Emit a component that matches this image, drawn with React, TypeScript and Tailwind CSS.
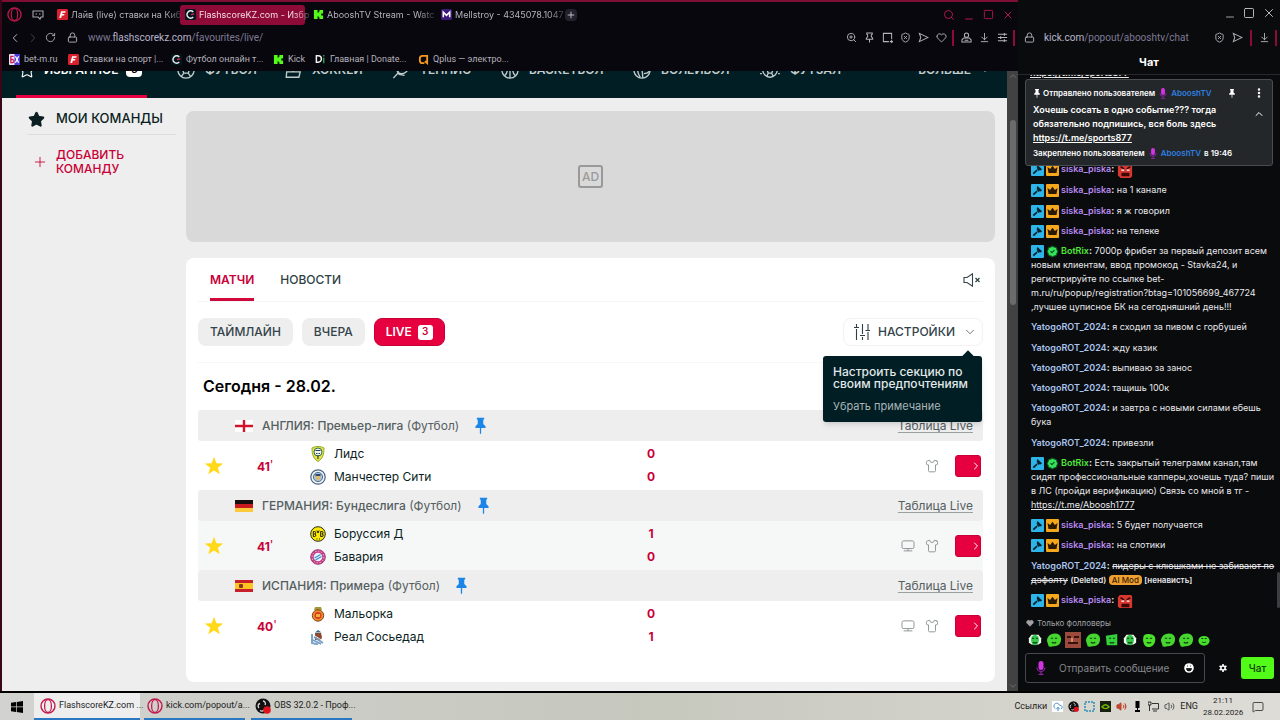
import type { ReactNode } from "react";
import {
  ArrowDownToLine,
  BadgeCheck,
  ChevronDown,
  ChevronLeft,
  ChevronRight,
  ChevronUp,
  CloudUpload,
  EllipsisVertical,
  Heart,
  Lock,
  MessageSquare,
  Minus,
  Plus,
  RotateCw,
  Search,
  ShieldX,
  Shirt,
  Square,
  Star,
  Volume2,
  X,
  ZoomIn,
} from "lucide-react";

/* ---------- small drawings ---------- */

const OperaIcon = ({ className = "size-4" }: { className?: string }) => (
  <svg viewBox="0 0 16 16" className={className} fill="none" stroke="#c4184c">
    <circle cx="8" cy="8" r="7" strokeWidth="1.4" />
    <ellipse cx="8" cy="8" rx="3.4" ry="6.4" strokeWidth="1.3" />
  </svg>
);

const KickIcon = () => (
  <svg viewBox="0 0 12 12" className="size-[11px] shrink-0">
    <path d="M1 1h4v3h1V3h1V1h4v4H9v2h2v4H7V9H6V8H5v3H1z" fill="#53fc18" />
  </svg>
);

const FlashIcon = () => (
  <svg viewBox="0 0 12 12" className="size-[11px] shrink-0">
    <rect width="12" height="12" rx="2" fill="#04161d" />
    <path d="M9 3.2A4 4 0 1 0 9 8.8" fill="none" stroke="#e8eef0" strokeWidth="1.6" />
    <path d="M6.5 6.2 10 5.2" stroke="#e8254f" strokeWidth="1.4" />
  </svg>
);

const FonbetIcon = () => (
  <svg viewBox="0 0 12 12" className="size-[11px] shrink-0">
    <rect width="12" height="12" rx="1.5" fill="#d8202e" />
    <path d="M4.5 2.5h5L9 4.2H6l-.3 1.2h2.5l-.5 1.6H5.3L4.5 9.8h-2z" fill="#fff" />
  </svg>
);

const MellIcon = () => (
  <svg viewBox="0 0 12 12" className="size-[11px] shrink-0">
    <rect width="12" height="12" rx="2" fill="#3d1a78" />
    <path d="M2.5 9V3.5L6 7l3.5-3.5V9" fill="none" stroke="#fff" strokeWidth="1.7" />
  </svg>
);

const BetIcon = () => (
  <svg viewBox="0 0 12 12" className="size-[11px] shrink-0">
    <rect width="12" height="12" rx="1" fill="#e9e6ff" />
    <path d="M6 0h6v12H6z" fill="#4a3ae0" />
    <path d="M5 2.5H2v7h2A1.8 1.8 0 0 0 4 6H2" fill="none" stroke="#d3174a" strokeWidth="1.4" />
    <path d="m7 2.5 3.5 7M10.5 2.5l-3.5 7" stroke="#fff" strokeWidth="1.4" />
  </svg>
);

const DonateIcon = () => (
  <svg viewBox="0 0 12 12" className="size-[11px] shrink-0">
    <path d="M1.5 2v7h2a3.5 3.5 0 0 0 0-7z" fill="none" stroke="#f2f2f2" strokeWidth="1.6" />
    <path d="M9.5 1v1.6M9.5 4v6" stroke="#2d9b55" strokeWidth="1.6" />
  </svg>
);

const QplusIcon = () => (
  <svg viewBox="0 0 12 12" className="size-[11px] shrink-0">
    <path d="M7 10H5a3 3 0 0 1-3-3V5a3 3 0 0 1 3-3h5v8L7.500 8" fill="none" stroke="#f39a1e" strokeWidth="2" />
  </svg>
);

const PushPin = ({ className }: { className: string }) => (
  <svg viewBox="0 0 12 18" className={className} fill="currentColor">
    <path d="M2 0h8v1.600L9 2.200v4.600l2.500 2.400v2.100H6.700V17L6 18l-.7-1V11.300H.5V9.200L3 6.800V2.200l-1-.6z" />
  </svg>
);

const PinOutline = () => (
  <svg viewBox="0 0 12 12" className="size-[11px]" fill="none" stroke="currentColor" strokeWidth="1.100">
    <path d="M3 1h6v1.500l-1 .5v2l1.500 2v1h-7V7L4 5V3l-1-.5zM6 8v3.500" />
  </svg>
);

const SnapshotIcon = () => (
  <svg viewBox="0 0 12 12" className="size-[11px]" fill="none" stroke="currentColor" strokeWidth="1.100">
    <path d="M7.500 10.500h-6v-9h9v6M10.500 8.500v3.500M8.500 10.500H12" />
  </svg>
);

const SendOutline = () => (
  <svg viewBox="0 0 12 12" className="size-[11px] shrink-0" fill="none" stroke="currentColor" strokeWidth="1.100">
    <path d="M1.500 1.500 11 6l-9.500 4.500L3 6z" />
  </svg>
);

const ProfileIcon = () => (
  <svg viewBox="0 0 12 12" className="size-[11px]" fill="none" stroke="currentColor" strokeWidth="1.100">
    <circle cx="6" cy="3.500" r="2.300" />
    <path d="M3 6.500h6l2 2v2.500H1V8.500zM4 9h4" />
  </svg>
);

const EasySetupIcon = () => (
  <svg viewBox="0 0 12 12" className="size-[11px]" fill="none" stroke="currentColor" strokeWidth="1.200">
    <path d="M1 2.500h10M1 6h10M1 9.500h10M8 1v3M4 4.500v3M8 8v3" />
  </svg>
);

const ModBadge = () => (
  <svg viewBox="0 0 13 13" className="mr-0.5 inline size-[13px] align-[-4px]">
    <rect width="13" height="13" rx="1" fill="#2db4e8" />
    <path d="m6.500 2 4.500 4.200-1.200 1.200-1-.3-1 1-2-2 .6-.8-.8-1zM5.500 6.500l1.200 1.200-3.800 3.600-1.200-1.200z" fill="#06222e" />
  </svg>
);

const CrownBadge = () => (
  <svg viewBox="0 0 13 13" className="mr-0.5 inline size-[13px] align-[-4px]">
    <rect width="13" height="13" rx="1" fill="#f5a81c" />
    <path d="m1.500 4 2.600 2L6.500 2.800 8.900 6l2.600-2-1 6h-8z" fill="#2a1a02" />
  </svg>
);

const BotBadge = () => <BadgeCheck className="mr-0.5 inline size-[13px] fill-[#35e05a] align-[-4px] text-[#0b4a1b]" />;

const AngryEmote = () => (
  <svg viewBox="0 0 18 18" className="-my-0.5 inline size-4 align-[-5px]">
    <path d="M3 1h13l1 2v12l-2 2H4l-3-3V4z" fill="#d8382f" />
    <path d="m4 4 4 2.500M15 4l-4 2.500" stroke="#2b0504" strokeWidth="1.600" />
    <path d="M5 8h3M11 8h3" stroke="#fff" strokeWidth="1.500" />
    <rect x="5" y="11" width="9" height="4" rx="1" fill="#3b0806" />
  </svg>
);

const Mic = ({ className = "inline h-[11px] w-2 align-[-2px]" }: { className?: string }) => (
  <svg viewBox="0 0 10 14" className={className}>
    <rect x="2.500" y="0" width="5" height="9" rx="2.500" fill="#d033e0" />
    <path d="M1 6.500a4 4 0 0 0 8 0M5 10.500V13M2.500 13.300h5" fill="none" stroke="#8a22a6" strokeWidth="1.200" />
  </svg>
);

const MonitorIcon = () => (
  <svg viewBox="0 0 16 14" className="h-3 w-3.5" fill="none" stroke="#8b9193" strokeWidth="1.100">
    <rect x="1" y="1" width="14" height="9" rx="2" />
    <path d="M8 10v2.500M3 12.700h10" />
  </svg>
);

const SlidersIcon = () => (
  <svg viewBox="0 0 16 16" className="size-4" fill="none" stroke="#2f3f43" strokeWidth="1.100">
    <path d="M2.500 0v3M2.500 5v11M0 3.500h5M8.500 0v10M8.500 13v3M6 11.500h5M14 0v6M14 8v8M11.500 6.500h4.500" />
  </svg>
);

const MutedIcon = () => (
  <svg viewBox="0 0 18 14" className="h-3.5 w-[18px]" fill="none" stroke="#33434a">
    <path d="M1 4.500h3L9.500.8v12.400L4 9.500H1z" strokeWidth="1.100" />
    <path d="m12.500 5 4 4M16.500 5l-4 4" strokeWidth="1.300" />
  </svg>
);

const Ball = () => (
  <svg viewBox="0 0 20 20" className="size-[18px]" fill="none" stroke="currentColor" strokeWidth="1.500">
    <circle cx="10" cy="10" r="9" />
    <path d="m10 6 4 3-1.500 4.500h-5L6 9zM14 9l4.500-1M12.500 13.500l2.500 3.500M7.500 13.500 5 17M6 9 1.500 8M10 6V1" />
  </svg>
);

const Basket = () => (
  <svg viewBox="0 0 20 20" className="size-[18px]" fill="none" stroke="currentColor" strokeWidth="1.500">
    <circle cx="10" cy="10" r="9" />
    <path d="M10 1v18M4 3.500c4 4 4 9 0 13M16 3.500c-4 4-4 9 0 13" />
  </svg>
);

const Volley = () => (
  <svg viewBox="0 0 20 20" className="size-[18px]" fill="none" stroke="currentColor" strokeWidth="1.500">
    <circle cx="10" cy="10" r="9" />
    <path d="M10 10 3 4.500M10 10l8-4M10 10l1 9M5 9c0 4 1 6 3 9M12 14c3 0 5-1 6.500-3" />
  </svg>
);

const Puck = () => (
  <svg viewBox="0 0 20 20" className="size-[18px]" fill="none" stroke="currentColor" strokeWidth="1.500">
    <path d="M14 1 10 12M3 12h15l-1.500 6h-14z" />
  </svg>
);

const Racket = () => (
  <svg viewBox="0 0 20 20" className="size-[18px]" fill="none" stroke="currentColor" strokeWidth="1.500">
    <ellipse cx="12" cy="8" rx="7" ry="5.500" transform="rotate(-40 12 8)" />
    <path d="m7 13-5.500 6M6 10l2 5 6 1" />
  </svg>
);

const Futsal = () => (
  <svg viewBox="0 0 22 20" className="h-[18px] w-5" fill="none" stroke="currentColor" strokeWidth="1.500">
    <circle cx="11" cy="10" r="8" />
    <path d="m11 6 3.500 3-1.500 4.500H9L7.500 9zM13 13.500l1.500 3.500M9 13.500 7.500 17M0 14h2M20 14h2" />
  </svg>
);

/* ---------- flags and crests ---------- */

const flags: Record<string, ReactNode> = {
  england: (
    <>
      <rect width="18" height="12" fill="#fff" />
      <path d="M9 0v12M0 6h18" stroke="#cf142b" strokeWidth="2.400" />
    </>
  ),
  germany: (
    <>
      <rect width="18" height="4" fill="#1a0d0d" />
      <rect y="4" width="18" height="4" fill="#c91a1f" />
      <rect y="8" width="18" height="4" fill="#fbc93a" />
    </>
  ),
  spain: (
    <>
      <rect width="18" height="12" fill="#c8202a" />
      <rect y="3" width="18" height="6" fill="#fcc521" />
      <rect x="4" y="4" width="4" height="4" rx="1" fill="#8a3a1c" />
    </>
  ),
};

const crests: Record<string, ReactNode> = {
  leeds: (
    <>
      <path d="M8 .5c3 0 5 .8 6 1.500 0 6-1 10.500-6 13.500C3 12.500 2 8 2 2c1-.7 3-1.500 6-1.500z" fill="#e6e23a" stroke="#8fae3a" />
      <circle cx="8" cy="6" r="4" fill="#f1f5e8" stroke="#3c6b52" />
      <path d="M5.500 4.500h5M6 7.500h1.500M8.500 7.500H10M8 9v4" stroke="#23446b" strokeWidth="1.200" />
    </>
  ),
  city: (
    <>
      <circle cx="8" cy="8" r="7.200" fill="#eef3f7" stroke="#4b6280" strokeWidth="1.200" />
      <circle cx="8" cy="8" r="4.600" fill="#9cc4e6" stroke="#54708f" />
      <path d="M5.500 5.500h5V9L8 12 5.500 9z" fill="#e2b96a" />
      <path d="M5.500 6h5" stroke="#2f4a6c" strokeWidth="2" />
    </>
  ),
  bvb: (
    <>
      <circle cx="8" cy="8" r="7.300" fill="#fbe90a" stroke="#2a2a08" />
      <path d="M3.300 5.500v5h1.200a1.300 1.300 0 0 0 0-2.600 1.200 1.200 0 0 0 0-2.400zM10.700 5.500v5h1.200a1.300 1.300 0 0 0 0-2.600 1.200 1.200 0 0 0 0-2.400zM6.900 4.500 8 7l1.100-2.500M6.500 13h1M9 13h1" fill="none" stroke="#15150a" />
    </>
  ),
  bayern: (
    <>
      <circle cx="8" cy="8" r="7.300" fill="#c43a86" stroke="#a83a72" />
      <circle cx="8" cy="8" r="5.900" fill="none" stroke="#f0c4dc" strokeDasharray="1.500 1.500" />
      <circle cx="8" cy="8" r="4.300" fill="#eef4fb" />
      <path d="m4.500 9 6-3.500M5.500 11l6-3.500" stroke="#3d94d8" strokeWidth="1.400" />
    </>
  ),
  mallorca: (
    <>
      <path d="M5 1h6l1 3H4z" fill="#a9983a" />
      <circle cx="8" cy="9.500" r="5.700" fill="#f08a24" stroke="#7a4a22" />
      <circle cx="8" cy="9.500" r="3.400" fill="#d93a2a" />
      <path d="M6 8h4v3H6z" fill="#f3b13a" />
    </>
  ),
  sociedad: (
    <>
      <path d="M2 5v9l6 1.500" fill="none" stroke="#7fa3c4" strokeWidth="2" />
      <path d="M5 4h6l1 4-1 3H5z" fill="#8a4a35" />
      <path d="M5 3.500 8 1l3.500 2.500z" fill="#3f6a8f" />
      <path d="m4 8 9 6M3 11l8 4" stroke="#6f9cc8" strokeWidth="1.600" />
      <path d="m5 7 8 5" stroke="#f0ede6" />
    </>
  ),
};

/* ---------- data ---------- */

const tabs = [
  { icon: <FonbetIcon />, title: "Лайв (live) ставки на Киб" },
  { icon: <FlashIcon />, title: "FlashscoreKZ.com - Избр", active: true },
  { icon: <KickIcon />, title: "AbooshTV Stream - Watc" },
  { icon: <MellIcon />, title: "Mellstroy - 4345078.1047" },
];

const bookmarks = [
  { icon: <BetIcon />, title: "bet-m.ru", width: "w-[59px]" },
  { icon: <FonbetIcon />, title: "Ставки на спорт |...", width: "w-[103px]" },
  { icon: <FlashIcon />, title: "Футбол онлайн т...", width: "w-[102px]" },
  { icon: <KickIcon />, title: "Kick", width: "w-[42px]" },
  { icon: <DonateIcon />, title: "Главная | Donate...", width: "w-[103px]" },
  { icon: <QplusIcon />, title: "Qplus — электро...", width: "w-[102px]" },
];

const sports = [
  { icon: <Ball />, title: "ФУТБОЛ", width: "w-[107px]" },
  { icon: <Puck />, title: "ХОККЕЙ", width: "w-[108px]" },
  { icon: <Racket />, title: "ТЕННИС", width: "w-[109px]" },
  { icon: <Basket />, title: "БАСКЕТБОЛ", width: "w-[132px]" },
  { icon: <Volley />, title: "ВОЛЕЙБОЛ", width: "w-[127px]" },
  { icon: <Futsal />, title: "ФУТЗАЛ", width: "w-[110px]" },
];

const leagues = [
  {
    flag: "england", country: "АНГЛИЯ", name: "Премьер-лига", time: "41", tv: false,
    teams: [["leeds", "Лидс", "0"], ["city", "Манчестер Сити", "0"]],
  },
  {
    flag: "germany", country: "ГЕРМАНИЯ", name: "Бундеслига", time: "41", tv: true, shaded: true,
    teams: [["bvb", "Боруссия Д", "1"], ["bayern", "Бавария", "0"]],
  },
  {
    flag: "spain", country: "ИСПАНИЯ", name: "Примера", time: "40", tv: true,
    teams: [["mallorca", "Мальорка", "0"], ["sociedad", "Реал Сосьедад", "1"]],
  },
];

const messages: { user: "siska" | "bot" | "yatogo"; text: ReactNode }[] = [
  { user: "siska", text: <AngryEmote /> },
  { user: "siska", text: "на 1 канале" },
  { user: "siska", text: "я ж говорил" },
  { user: "siska", text: "на телеке" },
  {
    user: "bot",
    text: "7000р фрибет за первый депозит всем новым клиентам, ввод промокод - Stavka24, и регистрируйте по ссылке bet-m.ru/ru/popup/registration?btag=101056699_467724 ,лучшее цуписное БК на сегодняшний день!!!",
  },
  { user: "yatogo", text: "я сходил за пивом с горбушей" },
  { user: "yatogo", text: "жду казик" },
  { user: "yatogo", text: "выпиваю за занос" },
  { user: "yatogo", text: "тащишь 100к" },
  { user: "yatogo", text: "и завтра с новыми силами ебешь бука" },
  { user: "yatogo", text: "привезли" },
  {
    user: "bot",
    text: (
      <>
        Есть закрытый телеграмм канал,там
        <br />
        сидят профессиональные капперы,хочешь туда? пиши в ЛС (пройди верификацию) Связь со мной в тг -
        <br />
        <a href="#" className="underline">https://t.me/Aboosh1777</a>
      </>
    ),
  },
  { user: "siska", text: "5 будет получается" },
  { user: "siska", text: "на слотики" },
  {
    user: "yatogo",
    text: (
      <>
        <s>пидеры с клюшками не забивают по дэфолту</s>{" "}
        <span className="text-[8px] font-semibold">(Deleted)</span>{" "}
        <span className="rounded-sm bg-[#f0a030] px-[3px] text-[8px] font-medium text-[#3a1d00]">AI Mod</span>{" "}
        <span className="text-[8px] font-semibold">[ненависть]</span>
      </>
    ),
  },
  { user: "siska", text: <AngryEmote /> },
];

const emotes = ["dead", "blob", "photo", "blob", "square", "dead", "tall", "blob", "blob", "small"];

/* ---------- browser chrome ---------- */

function TabStrip() {
  return (
    <div className="flex h-[27px] items-center border-t-2 border-[#7d0f35] pl-[5px] pr-1">
      <OperaIcon className="size-[15px] shrink-0" />
      <svg viewBox="0 0 12 10" className="ml-2.5 h-2.5 w-3 shrink-0" fill="none" stroke="#a7a4ad" strokeWidth="1.100">
        <path d="M1 1h10v6H9L8 9 6 7H1zM3.500 4h1.500M7 4h1.500" />
      </svg>
      <div className="ml-2 flex gap-[3px]">
        {tabs.map((t) => (
          <button
            key={t.title}
            className={
              t.active
                ? "flex h-5 w-[125px] items-center gap-[3px] rounded-[3px] bg-[#8e0b37] px-[5px] text-[#f3dbe3]"
                : "flex h-5 w-[125px] items-center gap-[3px] px-[5px] text-[#b5b2bb]"
            }
          >
            {t.icon}
            <span className="whitespace-nowrap text-[9px] [mask-image:linear-gradient(to_right,black_85%,#0004)]">{t.title}</span>
          </button>
        ))}
      </div>
      <button aria-label="Новая вкладка" className="ml-1 flex size-3 items-center justify-center rounded-sm bg-[#23212c] text-[#d7d4de]">
        <Plus className="size-2.5" />
      </button>
      <div className="ml-auto flex items-center gap-2 text-[#b0184a]">
        <Search className="size-3" strokeWidth={2} />
        <Minus className="mt-2 size-3" strokeWidth={2} />
        <Square className="size-[11px]" strokeWidth={2} />
        <X className="size-3" strokeWidth={2} />
      </div>
    </div>
  );
}

function AddressBar() {
  return (
    <div className="flex h-[21px] items-center pl-1.5 text-[#b5b2bb]">
      <ChevronLeft className="size-3.5" strokeWidth={1.700} />
      <ChevronRight className="ml-1 size-3.5 text-[#45434d]" strokeWidth={1.700} />
      <RotateCw className="ml-[5px] size-[11px]" strokeWidth={1.900} />
      <Lock className="ml-[11px] size-[11px]" strokeWidth={2} />
      <span className="ml-2.5 text-[10px] text-[#7f7a95]">
        www.<span className="text-[#b9b6cc]">flashscorekz.com</span>/favourites/live/
      </span>
      <div className="ml-auto flex items-center gap-[7px] pr-[3px]">
        <ZoomIn className="size-[11px]" />
        <PinOutline />
        <SnapshotIcon />
        <ShieldX className="size-[11px]" />
        <SendOutline />
        <Heart className="size-[11px]" />
        <span className="-ml-0.5 h-4 w-0.5 bg-[#8e0b37]" />
        <ProfileIcon />
        <ArrowDownToLine className="size-[11px]" />
        <EasySetupIcon />
        <span className="-ml-0.5 h-4 w-0.5 bg-[#8e0b37]" />
      </div>
    </div>
  );
}

function Bookmarks() {
  return (
    <div className="flex h-[23px] items-center pl-[7px] text-[9px] text-[#b5b2bb]">
      {bookmarks.map((b) => (
        <a key={b.title} href="#" className={`${b.width} flex shrink-0 items-center gap-1 whitespace-nowrap`}>
          {b.icon}
          {b.title}
        </a>
      ))}
    </div>
  );
}

/* ---------- score page ---------- */

function SportsNav() {
  return (
    <div className="flex h-[27px] shrink-0 flex-col justify-end overflow-hidden bg-[#001e23]">
      <nav className="flex h-[57px] shrink-0 items-stretch pl-3.5 text-xs font-semibold text-[#c3cccd]">
        <a href="#" className="mr-7 flex w-[131px] items-center gap-2 border-b-[3px] border-[#e6003f] pl-0.5 pt-[3px] text-white">
          <Star className="size-[18px]" strokeWidth={1.500} />
          ИЗБРАННОЕ
          <span className="flex h-[15px] w-4 items-center justify-center rounded-sm bg-white text-[10px] text-black">3</span>
        </a>
        {sports.map((s) => (
          <a key={s.title} href="#" className={`${s.width} flex shrink-0 items-center gap-2.5 pl-0.5`}>
            {s.icon}
            {s.title}
          </a>
        ))}
        <button className="ml-auto mr-4 flex items-center gap-2">
          БОЛЬШЕ <ChevronDown className="size-3" />
        </button>
      </nav>
    </div>
  );
}

function Sidebar() {
  return (
    <aside className="w-[184px] shrink-0 pl-[26px] pr-2.5 text-[#0b1e22]">
      <h2 className="flex h-[37px] items-center gap-2 border-b border-[#dcdcdc] pt-1.5 text-[13px] font-medium">
        <Star className="size-[17px] fill-current" />
        <span className="pl-[3px]">МОИ КОМАНДЫ</span>
      </h2>
      <button className="mt-[13px] flex items-center gap-2 pl-1 text-left text-xs font-medium leading-[14px] text-[#c80037]">
        <Plus className="size-4" strokeWidth={1.300} />
        <span>
          ДОБАВИТЬ
          <br />
          КОМАНДУ
        </span>
      </button>
    </aside>
  );
}

function League({ league }: { league: (typeof leagues)[number] }) {
  return (
    <section>
      <header className="flex h-[31px] items-center rounded-[3px] bg-[#eee] pl-[37px] pr-2.5 text-xs text-[#555e61]">
        <svg viewBox="0 0 18 12" className="mr-[9px] h-3 w-[18px]">{flags[league.flag]}</svg>
        <h3>
          <span className="font-medium">{league.country}: {league.name}</span> (Футбол)
        </h3>
        <button aria-label="Закрепить" className="ml-4 text-[#1b86e8]">
          <PushPin className="h-[18px] w-[11px]" />
        </button>
        <a href="#" className="ml-auto underline decoration-[#9aa0a2] underline-offset-2">Таблица Live</a>
      </header>
      <div className={league.shaded ? "flex h-[49px] items-center bg-[#f6f7f7] pr-0.5" : "flex h-[49px] items-center pr-0.5"}>
        <button aria-label="В избранное" className="ml-1.5">
          <svg viewBox="0 0 20 20" className="size-5" fill="#ffd91a">
            <path d="m10 .8 2.400 6.400 6.800.3-5.300 4.200 1.800 6.600L10 14.600l-5.700 3.700 1.800-6.600L.8 7.500l6.800-.3z" />
          </svg>
        </button>
        <span className="ml-[33px] w-5 whitespace-nowrap text-xs font-bold text-[#c80037]">{league.time}<span className="align-[2px] font-normal">'</span></span>
        <div className="ml-[33px] flex flex-1 flex-col gap-[5px]">
          {league.teams.map(([crest, name, score]) => (
            <div key={name} className="flex items-center text-xs leading-[18px] text-[#0b1e22]">
              <svg viewBox="0 0 16 16" className="mr-2 size-4">{crests[crest]}</svg>
              <span className="w-[312px]">{name}</span>
              <span className="w-2.5 text-center font-bold text-[#c80037]">{score}</span>
            </div>
          ))}
        </div>
        <div className="flex items-center gap-2.5">
          {league.tv && <MonitorIcon />}
          <Shirt className="size-3.5 text-[#8b9193]" strokeWidth={1.600} />
          <button aria-label="Смотреть" className="ml-1.5 flex h-[22px] w-[26px] items-center justify-end rounded-[3px] border border-[#c80037] bg-[#e6003f] text-white">
            <ChevronRight className="-mr-0.5 size-3" strokeWidth={2} />
          </button>
        </div>
      </div>
    </section>
  );
}

function Matches() {
  return (
    <div className="flex-1 rounded-lg bg-white px-3">
      <div className="flex h-11 items-stretch border-b border-[#f5f5f5] pl-3 text-xs text-[#2f3f43]">
        <button className="mr-[26px] border-b-[3px] border-[#d0083c] pt-[3px] font-semibold text-[#c80037]">МАТЧИ</button>
        <button className="font-medium">НОВОСТИ</button>
        <button aria-label="Звук выключен" className="ml-auto mr-0.5">
          <MutedIcon />
        </button>
      </div>
      <div className="flex h-[61px] items-center gap-[9px] border-b border-[#f7f7f7] text-xs font-medium text-[#33434a]">
        <button className="h-7 rounded-lg bg-[#eee] px-3">ТАЙМЛАЙН</button>
        <button className="h-7 rounded-lg bg-[#eee] px-3">ВЧЕРА</button>
        <button className="flex h-7 items-center gap-1.5 rounded-lg border border-[#c80037] bg-[#e6003f] px-[11px] font-semibold text-white">
          LIVE
          <span className="flex size-[15px] items-center justify-center rounded-[3px] bg-white text-[10px] text-[#c80037]">3</span>
        </button>
        <div className="relative ml-auto">
          <button className="flex h-7 items-center gap-2 rounded-lg border border-[#f2f2f2] pl-2.5 pr-[5px]">
            <SlidersIcon />
            НАСТРОЙКИ
            <ChevronDown className="size-3.5" strokeWidth={1.200} />
          </button>
          <div role="tooltip" className="absolute right-px top-[38px] z-10 w-[159px] rounded-[3px] bg-[#001e23] px-2.5 py-2.5 text-xs leading-3 text-[#e3e8e9] shadow-md">
            <span className="absolute -top-1 right-2.5 size-2 rotate-45 bg-[#001e23]" />
            <p className="whitespace-nowrap">
              Настроить секцию по
              <br />
              своим предпочтениям
            </p>
            <button className="mt-2.5 block text-[11px] font-normal leading-3 text-[#aab5b7]">Убрать примечание</button>
          </div>
        </div>
      </div>
      <h1 className="flex h-[47px] items-center pb-0.5 pl-[5px] text-base font-semibold text-black">Сегодня - 28.02.</h1>
      {leagues.map((l) => (
        <League key={l.flag} league={l} />
      ))}
    </div>
  );
}

function ScorePage() {
  return (
    <div className="flex min-h-0 flex-1">
      <div className="flex min-w-0 flex-1 flex-col bg-[#eee]">
        <SportsNav />
        <div className="flex flex-1">
          <Sidebar />
          <main className="flex min-w-0 flex-1 flex-col gap-4 pb-[9px] pr-3 pt-[13px]">
            <div className="flex h-[131px] items-center justify-center rounded-lg bg-[#d9d9d9]">
              <span className="flex h-[23px] w-[25px] items-center justify-center rounded-[3px] border-2 border-[#999] text-xs font-medium text-[#999]">AD</span>
            </div>
            <Matches />
          </main>
        </div>
      </div>
      <div className="flex w-[11px] flex-col items-center bg-[#424242] text-[#777]">
        <ChevronUp className="size-2.5" />
        <div className="mt-[39px] h-[185px] w-1.5 rounded-sm bg-[#6b6b6b]" />
        <ChevronDown className="mt-auto size-2.5" />
      </div>
    </div>
  );
}

/* ---------- chat window ---------- */

function Message({ user, text }: { user: "siska" | "bot" | "yatogo"; text: ReactNode }) {
  return (
    <p className="[overflow-wrap:anywhere]">
      {user !== "yatogo" && <ModBadge />}
      {user === "siska" && <CrownBadge />}
      {user === "bot" && <BotBadge />}
      {user === "siska" && <span className="font-semibold text-[#b98af0]">siska_piska</span>}
      {user === "bot" && <span className="font-semibold text-[#4ee83a]">BotRix</span>}
      {user === "yatogo" && <span className="font-semibold text-[#a9c4ee]">YatogoROT_2024</span>}
      <b>:</b> {text}
    </p>
  );
}

function PinnedMessage() {
  return (
    <div className="z-10 mx-[7px] flex h-[87px] shrink-0 flex-col rounded-[3px] border border-[#4a4d50] bg-[#24272a] px-[7px] pt-[7px] text-[8px] font-semibold text-white">
      <div className="flex h-3 items-center whitespace-nowrap">
        <PushPin className="mx-px h-[9px] w-1.5" />
        <span className="ml-0.5">Отправлено пользователем</span>
        <Mic className="mx-1 h-[11px] w-2" />
        <span className="text-[#2f7fe0]">AbooshTV</span>
        <PushPin className="ml-auto h-[9px] w-1.5" />
        <EllipsisVertical className="ml-[18px] size-3" strokeWidth={3} />
      </div>
      <div className="mt-1 flex items-start text-[9px] leading-[14px]">
        <p className="flex-1">
          Хочешь сосать в одно событие??? тогда обязательно подпишись, вся боль здесь{" "}
          <a href="#" className="underline">https://t.me/sports877</a>
        </p>
        <ChevronUp className="ml-4 mt-[5px] size-3" />
      </div>
      <p className="mt-0.5 flex items-center leading-3">
        Закреплено пользователем
        <Mic className="mx-1 h-[11px] w-2" />
        <span className="mr-[3px] text-[#2f7fe0]">AbooshTV</span>
        в 19:46
      </p>
    </div>
  );
}

function Emote({ kind }: { kind: string }) {
  if (kind === "photo") {
    return (
      <svg viewBox="0 0 16 16" className="size-4">
        <rect width="16" height="16" fill="#9b4a3c" />
        <path d="M2 5h4M9 5h5M3 11h10" stroke="#35120e" strokeWidth="2" />
        <path d="M7 6v4" stroke="#d68a75" strokeWidth="2" />
      </svg>
    );
  }
  return (
    <svg viewBox="0 0 16 16" className={kind === "small" ? "size-3" : "size-3.5"}>
      {kind === "dead" && <path d="M1 6 4 2h8l3 4v5l-3 2H4l-3-2z" fill="#f2f7f2" />}
      {kind === "dead" && <ellipse cx="8" cy="8" rx="4.500" ry="6" fill="#35c84a" />}
      {kind === "square" && <path d="m1 3 13-2v13H2z" fill="#35d23a" />}
      {kind === "tall" && <path d="M2 3c4-3 11-2 13 2 1 7-3 11-8 11S0 8 2 3z" fill="#4be02a" />}
      {kind === "small" && <ellipse cx="8" cy="9" rx="7.500" ry="6.500" fill="#46e02a" />}
      {kind === "blob" && <path d="M0 9C0 4 4 .5 9 .5c5 0 7.500 3 7 7.500-.5 4.500-3 7-8 7-2 0-3 1-6 .5z" fill="#46d62e" />}
      <path d="M4.500 6h2.500M9 6h2.500M5.500 10.500c1.500 1 3.500 1 5 0" fill="none" stroke="#0a3a10" strokeWidth="1.400" />
    </svg>
  );
}

function Chat() {
  return (
    <aside className="flex w-[262px] shrink-0 flex-col bg-[#0a0b0d] font-[Inter,'Noto_Sans',sans-serif] text-[#e9e9ec]">
      <div className="flex h-[27px] shrink-0 items-center justify-end gap-[7px] pb-0.5 pr-1 text-[#d3d3d6]">
        <Minus className="mt-2 size-3" strokeWidth={1.500} />
        <Square className="size-3" strokeWidth={1.700} />
        <X className="size-3.5" strokeWidth={1.500} />
      </div>
      <div className="flex h-[21px] shrink-0 items-center gap-[7px] pl-1.5 pr-[3px] text-[#b5b2bb]">
        <Lock className="size-[11px] shrink-0" />
        <span className="ml-0.5 font-[Roboto,'Noto_Sans',sans-serif] text-[10px] text-[#7f7a95]">
          <span className="text-[#b9b6cc]">kick.com</span>/popout/abooshtv/chat
        </span>
        <ShieldX className="ml-auto size-[11px] shrink-0" />
        <SendOutline />
        <span className="h-4 w-0.5 shrink-0 bg-[#8e0b37]" />
        <ArrowDownToLine className="size-[11px] shrink-0" />
        <span className="-ml-0.5 h-4 w-0.5 shrink-0 bg-[#8e0b37]" />
      </div>
      <h2 className="flex h-[27px] shrink-0 items-center justify-center border-b border-[#26282b] pt-0.5 text-[11px] font-bold text-white">Чат</h2>
      <div className="flex h-1 shrink-0 flex-col justify-end overflow-hidden px-3 text-[9px] font-semibold leading-3">
        <a href="#" className="underline">https://t.me/sports877</a>
      </div>
      <PinnedMessage />
      <div className="-mt-1 flex min-h-0 flex-1 items-end">
        <div className="flex h-full flex-1 flex-col justify-between overflow-hidden pl-[13px] pr-px text-[9px] leading-[14px]">
          {messages.map((m, i) => (
            <Message key={i} user={m.user} text={m.text} />
          ))}
        </div>
        <div className="h-9 w-[3px] rounded-sm bg-[#3c3d40]" />
      </div>
      <div className="mt-2 flex h-3.5 shrink-0 items-center gap-[3px] pl-2 text-[8px] text-[#a0a2a5]">
        <Heart className="size-2 fill-current" />
        Только фолловеры
      </div>
      <div className="ml-2.5 mt-0.5 flex h-4 w-[182px] shrink-0 items-center justify-between">
        {emotes.map((e, i) => (
          <button key={i} aria-label={`Эмоция ${i + 1}`}>
            <Emote kind={e} />
          </button>
        ))}
      </div>
      <form className="mb-2 mt-[5px] flex h-[30px] shrink-0 items-center pl-[7px] pr-1.5">
        <label className="flex h-full flex-1 items-center rounded-[3px] border border-[#45484c] px-2.5">
          <Mic className="h-3.5 w-2.5 shrink-0" />
          <input aria-label="Сообщение" placeholder="Отправить сообщение" className="ml-[13px] w-full min-w-0 text-[10px] placeholder:text-[#85878b]" />
          <svg viewBox="0 0 10 10" className="size-2.5 shrink-0">
            <circle cx="5" cy="5" r="4.800" fill="#fff" />
            <path d="M2.500 5.500h5a2.500 2.500 0 0 1-5 0zM3 3h1M6 3h1" fill="#111" stroke="#111" strokeWidth=".8" />
          </svg>
        </label>
        <button type="button" aria-label="Настройки чата" className="mx-3.5">
          <svg viewBox="0 0 10 10" className="size-2">
            <path d="M5 0v10M.7 2.500l8.600 5M9.300 2.500l-8.600 5" stroke="#fff" strokeWidth="2" />
            <circle cx="5" cy="5" r="2.600" fill="#0b0c0f" stroke="#fff" strokeWidth="1.800" />
          </svg>
        </button>
        <button type="button" className="h-[22px] w-[33px] rounded-[3px] bg-[#53fc18] text-[10px] font-medium text-[#0d3a05]">Чат</button>
      </form>
    </aside>
  );
}

/* ---------- taskbar ---------- */

const ObsIcon = ({ className = "size-4" }: { className?: string }) => (
  <svg viewBox="0 0 16 16" className={className}>
    <circle cx="8" cy="8" r="7.500" fill="#111" />
    <path d="M8 3a2.600 2.600 0 0 1 2 4M4 10a2.600 2.600 0 0 1 1-4.500M9 12a3 3 0 0 1-4 .5" fill="none" stroke="#ddd" strokeWidth="1.300" />
    <circle cx="12" cy="12" r="3.800" fill="#e0121c" />
  </svg>
);

function Taskbar() {
  return (
    <footer className="flex h-[27px] shrink-0 items-center bg-linear-to-r from-[#d2d2d0] via-[#c6c7bd] to-[#dedcd6] font-[Roboto,'Noto_Sans',sans-serif] text-[9px] text-[#1c1c1c]">
      <button aria-label="Пуск" className="mx-[11px]">
        <svg viewBox="0 0 12 12" className="size-3">
          <path d="m0 1.700 5-.7v4.600H0zM5.700.9 12 0v5.600H5.700zM0 6.300h5V11l-5-.7zM5.700 6.300H12V12l-6.300-.9z" />
        </svg>
      </button>
      <button className="mr-1 flex h-full w-[106px] items-center gap-[3px] whitespace-nowrap border-b-2 border-[#2a78c2] bg-[#eeeeee] pl-1.5">
        <OperaIcon className="size-4 shrink-0" />
        FlashscoreKZ.com ...
      </button>
      <button className="mr-1.5 flex h-full w-[101px] items-center gap-[3px] whitespace-nowrap border-b-2 border-[#2a78c2] pl-[3px]">
        <OperaIcon className="size-4 shrink-0" />
        kick.com/popout/a...
      </button>
      <button className="flex h-full w-[101px] items-center gap-[3px] whitespace-nowrap border-b-2 border-[#2a78c2] pl-1">
        <ObsIcon className="size-4 shrink-0" />
        OBS 32.0.2 - Проф...
      </button>
      <div className="ml-auto flex items-center gap-[5px] pr-4">
        <span>Ссылки</span>
        <span className="flex size-[11px] items-center justify-center bg-white text-[#2a78c2]"><CloudUpload className="size-2.5" /></span>
        <ObsIcon className="size-[11px]" />
        <svg viewBox="0 0 11 11" className="size-[11px]" fill="none" stroke="#2f8fb8" strokeWidth="1.500" strokeDasharray="2 1">
          <rect x="1" y="1" width="9" height="9" />
        </svg>
        <svg viewBox="0 0 11 11" className="size-[11px]">
          <rect width="11" height="11" fill="#16200c" />
          <path d="M2 6c2-3 5-3 7 0-2 2-5 2-7 0z" fill="none" stroke="#76b900" strokeWidth="1.500" />
        </svg>
        <Volume2 className="size-[11px] fill-[#c0442e] text-[#c0442e]" />
        <svg viewBox="0 0 11 11" className="size-[11px]">
          <path d="M3.500 0h4v7h-4zM5 7h1v2h2v2H3V9h2z" />
        </svg>
        <svg viewBox="0 0 11 11" className="size-[11px]" fill="none" stroke="#333">
          <path d="M4 2.500h6.500v5.500H4M0 1h3v3H0zM1.500 4v6M5 10h4" />
        </svg>
        <Volume2 className="size-[11px]" strokeWidth={1.500} />
        <span>ENG</span>
        <time className="w-10 text-center text-[8px] leading-3">
          21:11
          <br />
          28.02.2026
        </time>
        <MessageSquare className="ml-1 size-3" strokeWidth={1.500} />
      </div>
    </footer>
  );
}

export default function App() {
  return (
    <div className="flex h-screen min-h-[720px] w-full flex-col overflow-hidden bg-black">
      <div className="flex min-h-0 flex-1 pb-0.5">
        <div className="flex min-w-0 flex-1 flex-col border-l-2 border-[#3a0719] bg-[#08070d] font-[Inter,'Noto_Sans',sans-serif]">
          <TabStrip />
          <div className="font-[Roboto,'Noto_Sans',sans-serif]">
            <AddressBar />
            <Bookmarks />
          </div>
          <ScorePage />
        </div>
        <Chat />
      </div>
      <Taskbar />
    </div>
  );
}
